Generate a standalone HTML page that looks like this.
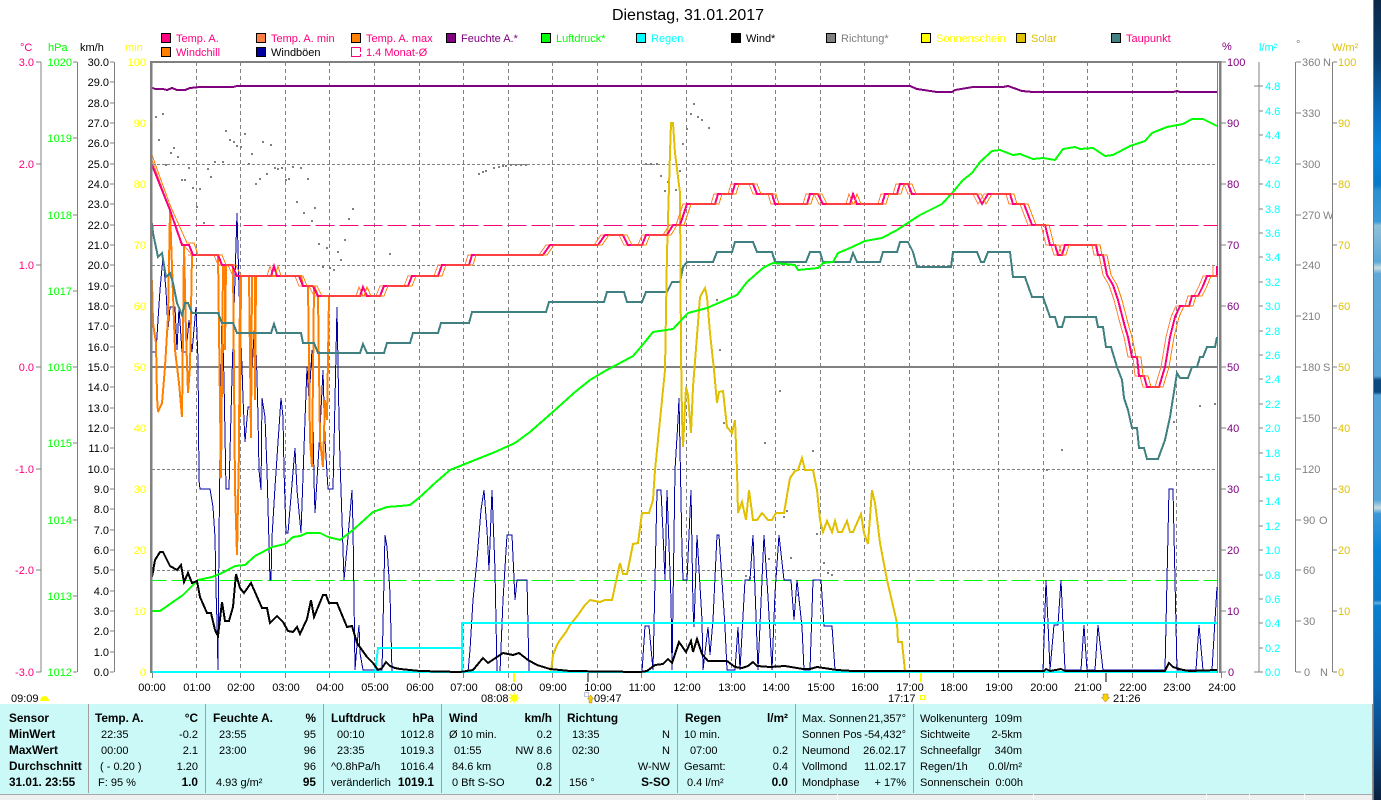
<!DOCTYPE html>
<html><head><meta charset="utf-8"><title>Dienstag, 31.01.2017</title>
<style>
html,body{margin:0;padding:0;background:#fff;width:1381px;height:800px;overflow:hidden}
svg{display:block;position:absolute;left:0;top:0}
text{font-family:"Liberation Sans",sans-serif;font-size:11px}
.b text,text.b{font-weight:bold;font-size:11.8px}
.l{fill:none;stroke-linejoin:miter}
</style></head><body>
<svg width="1381" height="800" viewBox="0 0 1381 800" xmlns="http://www.w3.org/2000/svg">
<defs>
<linearGradient id="wp" gradientUnits="userSpaceOnUse" x1="0" y1="0" x2="0" y2="800">
<stop offset="0" stop-color="#0a2848"/><stop offset=".075" stop-color="#0a3f70"/><stop offset=".137" stop-color="#0a6ab8"/><stop offset=".187" stop-color="#0a86dc"/><stop offset=".231" stop-color="#0878c8"/><stop offset=".238" stop-color="#2a90d0"/><stop offset=".277" stop-color="#3a9ad8"/><stop offset=".282" stop-color="#90c0d8"/><stop offset=".327" stop-color="#5aa8d8"/><stop offset=".335" stop-color="#c8dce0"/><stop offset=".342" stop-color="#5fa8d8"/><stop offset=".47" stop-color="#5aa6d8"/><stop offset=".475" stop-color="#0a4a80"/><stop offset=".49" stop-color="#0a4a80"/><stop offset=".494" stop-color="#55a4d8"/><stop offset=".625" stop-color="#58a6d8"/><stop offset=".635" stop-color="#c8dce0"/><stop offset=".642" stop-color="#3c98d8"/><stop offset=".687" stop-color="#0a84d8"/><stop offset=".75" stop-color="#0a78c8"/><stop offset=".754" stop-color="#60b0e0"/><stop offset=".757" stop-color="#0a80d0"/><stop offset=".85" stop-color="#0a6ab8"/><stop offset=".925" stop-color="#0a4a88"/><stop offset="1" stop-color="#0a2040"/>
</linearGradient>
<clipPath id="pl"><rect x="151" y="62" width="1067" height="611"/></clipPath>
<polyline id="t" fill="none" points="192,255 218,255 222,265 232,265 237,276 267,276 271,276 274,266 277,276 299,276 303,286 313,286 318,296 360,296 363,287 367,296 380,296 384,286 408,286 412,276 438,276 442,265 469,265 472,255 543,255 550,245 598,245 605,235 623,235 628,245 642,245 646,235 667,235 673,225 680,225 687,204 715,204 718,194 732,194 735,184 753,184 757,194 772,194 775,204 807,204 810,194 818,194 823,204 850,204 853,194 857,204 882,204 885,194 897,194 900,184 908,184 912,194 977,194 982,204 988,194 1010,194 1013,204 1024,204 1032,225 1045,225 1050,245 1055,245 1058,255 1062,255 1065,245 1096,245 1098,255 1103,255 1107,275 1113,285 1118,300 1125,327 1128,337 1132,357 1137,357 1139,376 1144,376 1147,387 1159,387 1165,367 1170,337 1175,317 1180,306 1189,306 1192,296 1198,296 1203,286 1207,276 1217,276 1217,266"/>
</defs>

<rect width="1381" height="800" fill="#fff"/>
<text x="688" y="20" text-anchor="middle" style="font-size:16px" fill="#000">Dienstag, 31.01.2017</text>

<!-- legend -->
<g stroke="#000" stroke-width="1" shape-rendering="crispEdges">
<rect x="161.500" y="33.500" width="9" height="9" fill="#FF0080"/><rect x="256.500" y="33.500" width="9" height="9" fill="#FF8040"/><rect x="351.500" y="33.500" width="9" height="9" fill="#FF8000"/><rect x="446.500" y="33.500" width="9" height="9" fill="#800080"/><rect x="541.500" y="33.500" width="9" height="9" fill="#00FF00"/><rect x="636.500" y="33.500" width="9" height="9" fill="#00FFFF"/><rect x="731.500" y="33.500" width="9" height="9" fill="#000"/><rect x="826.500" y="33.500" width="9" height="9" fill="#808080"/><rect x="921.500" y="33.500" width="9" height="9" fill="#FFFF00"/><rect x="1016.500" y="33.500" width="9" height="9" fill="#E0C000"/><rect x="1111.500" y="33.500" width="9" height="9" fill="#408080"/>
<rect x="161.500" y="47.500" width="9" height="9" fill="#FF8000"/><rect x="256.500" y="47.500" width="9" height="9" fill="#0000A0"/>
<path d="M360.500 47.500H351.500V56.500H360.500M360.500 47.500V52M360.500 54V56.500" fill="none" stroke="#FF0080"/>
</g>
<g fill="#FF0080">
<text x="176" y="42">Temp. A.</text><text x="271" y="42">Temp. A. min</text><text x="366" y="42">Temp. A. max</text><text x="1126" y="42">Taupunkt</text>
<text x="176" y="56">Windchill</text><text x="366" y="56">1.4 Monat-Ø</text>
</g>
<text x="461" y="42" fill="#800080">Feuchte A.*</text><text x="556" y="42" fill="#00FF00">Luftdruck*</text><text x="651" y="42" fill="#00FFFF">Regen</text><text x="746" y="42" fill="#000">Wind*</text><text x="841" y="42" fill="#808080">Richtung*</text><text x="936" y="42" fill="#FFFF00">Sonnenschein</text><text x="1031" y="42" fill="#E0C000">Solar</text><text x="271" y="56" fill="#000">Windböen</text>

<!-- unit labels -->
<text x="20" y="51" fill="#FF0080">°C</text><text x="48" y="51" fill="#00FF00">hPa</text><text x="80" y="51" fill="#000">km/h</text><text x="125" y="51" fill="#FFFF00">min</text>
<text x="1222" y="50" fill="#800080">%</text><text x="1259" y="51" fill="#00FFFF">l/m²</text><text x="1296" y="48" fill="#808080">°</text><text x="1332" y="51" fill="#E0C000">W/m²</text>

<!-- axes left -->
<g stroke="#808080" stroke-width="1" fill="none" shape-rendering="crispEdges">
<path d="M41 62V672M36 62H41M36 164H41M36 265H41M36 367H41M36 469H41M36 570H41M36 672H41"/>
<path d="M77.500 62V672M73 62H77M73 138H77M73 215H77M73 291H77M73 367H77M73 443H77M73 520H77M73 596H77M73 672H77"/>
<path d="M114.500 62V672M110 62H114M110 82H114M110 103H114M110 123H114M110 143H114M110 164H114M110 184H114M110 204H114M110 225H114M110 245H114M110 265H114M110 286H114M110 306H114M110 326H114M110 347H114M110 367H114M110 387H114M110 408H114M110 428H114M110 448H114M110 469H114M110 489H114M110 509H114M110 530H114M110 550H114M110 570H114M110 591H114M110 611H114M110 631H114M110 652H114M110 672H114"/>
<!-- axes right -->
<path d="M1221 62H1226M1221 123H1226M1221 184H1226M1221 245H1226M1221 306H1226M1221 367H1226M1221 428H1226M1221 489H1226M1221 550H1226M1221 611H1226M1221 672H1226"/>
<path d="M1259 62V672M1254 86H1263M1259 111H1263M1259 135H1263M1259 160H1263M1259 184H1263M1259 209H1263M1259 233H1263M1259 257H1263M1259 282H1263M1259 306H1263M1259 331H1263M1259 355H1263M1259 379H1263M1259 404H1263M1259 428H1263M1259 453H1263M1259 477H1263M1259 501H1263M1259 526H1263M1259 550H1263M1259 575H1263M1259 599H1263M1259 623H1263M1259 648H1263M1254 672H1263"/>
<path d="M1295.500 62V672M1296 62H1301M1296 113H1301M1296 164H1301M1296 215H1301M1296 265H1301M1296 316H1301M1296 367H1301M1296 418H1301M1296 469H1301M1296 520H1301M1296 570H1301M1296 621H1301M1296 672H1301"/>
<path d="M1332.500 62V672M1333 62H1337M1333 123H1337M1333 184H1337M1333 245H1337M1333 306H1337M1333 367H1337M1333 428H1337M1333 489H1337M1333 550H1337M1333 611H1337M1333 672H1337"/>
</g>
<g fill="#FF0080" text-anchor="end"><text x="34" y="66">3.0</text><text x="34" y="168">2.0</text><text x="34" y="269">1.0</text><text x="34" y="371">0.0</text><text x="34" y="473">-1.0</text><text x="34" y="574">-2.0</text><text x="34" y="676">-3.0</text></g>
<g fill="#00FF00" text-anchor="end"><text x="72" y="66">1020</text><text x="72" y="142">1019</text><text x="72" y="219">1018</text><text x="72" y="295">1017</text><text x="72" y="371">1016</text><text x="72" y="447">1015</text><text x="72" y="524">1014</text><text x="72" y="600">1013</text><text x="72" y="676">1012</text></g>
<g fill="#000" text-anchor="end"><text x="109" y="66">30.0</text><text x="109" y="86">29.0</text><text x="109" y="107">28.0</text><text x="109" y="127">27.0</text><text x="109" y="147">26.0</text><text x="109" y="168">25.0</text><text x="109" y="188">24.0</text><text x="109" y="208">23.0</text><text x="109" y="229">22.0</text><text x="109" y="249">21.0</text><text x="109" y="269">20.0</text><text x="109" y="290">19.0</text><text x="109" y="310">18.0</text><text x="109" y="330">17.0</text><text x="109" y="351">16.0</text><text x="109" y="371">15.0</text><text x="109" y="391">14.0</text><text x="109" y="412">13.0</text><text x="109" y="432">12.0</text><text x="109" y="452">11.0</text><text x="109" y="473">10.0</text><text x="109" y="493">9.0</text><text x="109" y="513">8.0</text><text x="109" y="534">7.0</text><text x="109" y="554">6.0</text><text x="109" y="574">5.0</text><text x="109" y="595">4.0</text><text x="109" y="615">3.0</text><text x="109" y="635">2.0</text><text x="109" y="656">1.0</text><text x="109" y="676">0.0</text></g>
<g fill="#FFFF00" text-anchor="end"><text x="146" y="66">100</text><text x="146" y="127">90</text><text x="146" y="188">80</text><text x="146" y="249">70</text><text x="146" y="310">60</text><text x="146" y="371">50</text><text x="146" y="432">40</text><text x="146" y="493">30</text><text x="146" y="554">20</text><text x="146" y="615">10</text><text x="146" y="676">0</text></g>
<g fill="#800080"><text x="1227" y="66">100</text><text x="1227" y="127">90</text><text x="1227" y="188">80</text><text x="1227" y="249">70</text><text x="1227" y="310">60</text><text x="1227" y="371">50</text><text x="1227" y="432">40</text><text x="1227" y="493">30</text><text x="1227" y="554">20</text><text x="1227" y="615">10</text><text x="1228" y="676">0</text></g>
<g fill="#00FFFF"><text x="1265" y="90">4.8</text><text x="1265" y="115">4.6</text><text x="1265" y="139">4.4</text><text x="1265" y="164">4.2</text><text x="1265" y="188">4.0</text><text x="1265" y="213">3.8</text><text x="1265" y="237">3.6</text><text x="1265" y="261">3.4</text><text x="1265" y="286">3.2</text><text x="1265" y="310">3.0</text><text x="1265" y="335">2.8</text><text x="1265" y="359">2.6</text><text x="1265" y="383">2.4</text><text x="1265" y="408">2.2</text><text x="1265" y="432">2.0</text><text x="1265" y="457">1.8</text><text x="1265" y="481">1.6</text><text x="1265" y="505">1.4</text><text x="1265" y="530">1.2</text><text x="1265" y="554">1.0</text><text x="1265" y="579">0.8</text><text x="1265" y="603">0.6</text><text x="1265" y="627">0.4</text><text x="1265" y="652">0.2</text><text x="1265" y="676">0.0</text></g>
<g fill="#808080"><text x="1302" y="66">360</text><text x="1302" y="117">330</text><text x="1302" y="168">300</text><text x="1302" y="219">270</text><text x="1302" y="269">240</text><text x="1302" y="320">210</text><text x="1302" y="371">180</text><text x="1302" y="422">150</text><text x="1302" y="473">120</text><text x="1303" y="524">90</text><text x="1303" y="574">60</text><text x="1303" y="625">30</text><text x="1304" y="676">0</text><text x="1323" y="66">N</text><text x="1323" y="219">W</text><text x="1323" y="371">S</text><text x="1319" y="524">O</text><text x="1320" y="676">N</text></g>
<g fill="#E0C000"><text x="1338" y="66">100</text><text x="1338" y="127">90</text><text x="1338" y="188">80</text><text x="1338" y="249">70</text><text x="1338" y="310">60</text><text x="1338" y="371">50</text><text x="1338" y="432">40</text><text x="1338" y="493">30</text><text x="1338" y="554">20</text><text x="1338" y="615">10</text><text x="1338" y="676">0</text></g>

<!-- grid -->
<g shape-rendering="crispEdges" fill="none">
<path stroke="#808080" stroke-dasharray="4 3" d="M196.500 62V672M240.500 62V672M285.500 62V672M329.500 62V672M374.500 62V672M419.500 62V672M463.500 62V672M508.500 62V672M552.500 62V672M597.500 62V672M641.500 62V672M686.500 62V672M731.500 62V672M775.500 62V672M820.500 62V672M864.500 62V672M909.500 62V672M953.500 62V672M998.500 62V672M1043.500 62V672M1087.500 62V672M1132.500 62V672M1176.500 62V672"/>
<path stroke="#808080" stroke-dasharray="3 2" d="M152 164.500H1218M152 265.500H1218M152 469.500H1218M152 570.500H1218"/>
<path stroke="#808080" stroke-width="2" d="M152 367H1218"/>
<path stroke="#FF0080" stroke-dasharray="19 5" stroke-dashoffset="4.700" d="M152 225.500H1218"/>
<path stroke="#00FF00" stroke-dasharray="19 5" stroke-dashoffset="4.700" d="M152 580.500H1218"/>
<path stroke="#808080" d="M152 672.500H1218M1217.500 62V672"/>
<path stroke="#808080" d="M152.500 672V678M196.500 672V678M240.500 672V678M285.500 672V678M329.500 672V678M374.500 672V678M419.500 672V678M463.500 672V678M508.500 672V678M552.500 672V678M597.500 672V678M641.500 672V678M686.500 672V678M731.500 672V678M775.500 672V678M820.500 672V678M864.500 672V678M909.500 672V678M953.500 672V678M998.500 672V678M1043.500 672V678M1087.500 672V678M1132.500 672V678M1176.500 672V678M1221.500 672V678"/>
<path stroke="#FFFF00" stroke-width="2" d="M514 672V682M921 672V682"/>
<path stroke="#808080" stroke-width="2" d="M588 672V682M1106 672V682"/>
</g>

<!-- dots -->
<path shape-rendering="crispEdges" stroke="#808080" stroke-width="2" fill="none" d="M155 117h2M162 114h2M158 140h2M225 131h2M229 140h2M233 142h2M236 146h2M240 147h2M244 134h2M262 142h2M270 145h2M170 153h2M173 148h2M177 157h2M251 154h2M248 164h2M165 165h2M188 168h2M207 169h2M214 162h2M222 162h2M210 177h2M181 180h2M184 180h2M192 188h2M199 189h2M255 184h2M259 179h2M266 174h2M274 168h2M277 169h2M281 168h2M292 167h2M300 168h2M285 180h2M288 179h2M307 179h2M196 207h2M203 223h2M296 202h2M303 213h2M311 221h2M314 208h2M352 209h2M348 219h2M344 240h2M318 244h2M326 248h2M337 252h2M340 260h2M322 267h2M329 268h2M389 254h2M333 270h2M478 174h2M482 172h2M485 171h2M493 168h2M498 167h2M502 166h2M505 166h2M510 165h2M515 165h2M520 165h2M525 165h2M645 164h2M650 164h2M656 164h2M660 176h2M667 182h2M664 191h2M675 190h2M679 171h2M682 144h2M686 129h2M690 114h2M693 104h2M697 117h2M701 120h2M708 128h2M723 423h2M764 443h2M812 451h2M790 558h2M823 563h2M827 573h2M831 575h2M816 534h2M820 528h2M768 559h2M745 576h2M749 578h2M753 577h2M786 511h2M783 517h2M797 595h2M716 300h2M719 350h2M779 391h2M1061 450h2M1199 406h2M1214 404h2M1173 422h2M1046 470h2"/>

<g clip-path="url(#pl)" shape-rendering="crispEdges">
<!-- gusts -->
<polyline class="l" stroke="#0000A0" stroke-width="1" points="152,352 156,352 158,320 160,290 163,257 166,290 168,330 170,307 175,307 177,350 179,307 182,352 186,352 189,320 192,352 196,307 198,360 199,480 200,489 210,489 213,507 215,537 216,590 217,622 218,670 219,537 222,307 224,380 226,489 229,489 232,377 235,278 237,213 238,248 239,290 242,367 243,398 245,442 248,407 250,407 255,317 257,377 258,417 259,470 261,490 262,398 265,417 267,470 270,580 271,580 272,537 275,487 281,398 283,417 284,470 286,533 288,533 295,448 297,490 301,533 305,420 307,367 309,400 312,350 314,480 315,513 320,430 323,370 325,440 328,489 333,489 335,400 337,307 339,420 340,460 344,580 348,537 352,490 353,527 355,670 357,645 359,625 360,653 363,670 382,670 385,535 387,547 390,593 392,672 468,672 470,650 473,600 477,560 481,510 484,490 487,530 489,570 492,490 495,570 497,672 500,672 503,600 507,535 512,535 515,600 517,580 527,580 529,672 642,672 645,626 649,626 653,670 655,580 657,490 661,490 663,533 665,580 667,490 671,600 672,670 675,470 678,420 679,398 682,550 683,580 687,580 691,490 693,607 694,627 697,535 702,620 703,670 708,627 710,655 713,620 717,535 719,535 725,627 727,670 735,670 738,627 740,670 745,580 750,580 753,535 758,670 762,580 764,535 768,597 772,670 775,593 779,535 784,580 791,580 794,620 797,580 802,627 804,670 810,670 813,580 821,580 824,626 832,626 835,670 840,672 1043,672 1046,580 1048,623 1050,670 1054,625 1058,625 1061,580 1065,670 1081,670 1084,625 1087,670 1095,670 1098,625 1103,670 1165,670 1169,489 1173,489 1177,670 1196,670 1199,625 1203,670 1212,670 1217,587"/>
<!-- windchill -->
<polyline class="l" stroke="#FF8000" stroke-width="2" points="152,280 153,323 156,343 157,397 158,412 162,403 165,367 168,317 170,210 172,267 175,350 179,383 182,417 184,245 186,333 188,393 190,367 192,255 218,255 221,478 223,265 225,265 225,350 226,265 233,265 235,487 237,555 239,450 240,276 240,417 241,276 249,276 251,438 252,276 255,276 255,400 256,276 301,276 303,286 308,286 310,440 312,467 314,286 318,296 320,440 323,467 325,400 327,420 329,296 332,296"/>
<!-- dewpoint -->
<polyline class="l" stroke="#408080" stroke-width="2" points="152,223 153,233 158,257 162,253 166,277 170,273 173,283 177,303 182,315 185,303 188,303 192,313 218,313 222,323 233,323 237,333 271,333 274,324 277,333 301,333 303,343 314,343 318,353 360,353 363,344 367,353 384,353 387,343 410,343 413,333 438,333 441,323 469,323 472,312 546,312 549,302 604,302 607,292 624,292 627,302 642,302 646,292 667,292 672,282 680,282 683,267 687,262 713,262 717,252 732,252 735,242 753,242 757,252 772,252 775,262 806,262 810,252 820,252 823,262 850,262 853,253 857,262 880,262 883,252 897,252 900,242 908,242 913,252 917,267 951,267 953,252 977,252 981,262 984,262 988,252 1010,252 1013,277 1025,277 1032,297 1043,297 1050,317 1055,317 1058,327 1062,327 1065,317 1096,317 1098,327 1103,327 1106,347 1111,347 1117,367 1122,380 1124,398 1128,410 1132,428 1137,428 1139,448 1144,448 1147,459 1158,459 1165,440 1170,417 1177,373 1180,378 1188,378 1192,367 1197,367 1200,357 1203,357 1207,347 1215,347 1217,337"/>
<!-- solar -->
<polyline class="l" stroke="#E0C000" stroke-width="2" points="551,672 553,655 557,645 560,640 566,632 570,625 578,615 585,605 590,600 600,602 605,600 612,600 620,563 623,574 627,574 633,544 638,543 642,513 649,513 653,500 655,470 660,420 665,370 667,253 670,153 671,123 673,123 675,153 680,193 681,353 682,417 683,447 686,387 688,395 691,433 693,387 700,297 705,288 707,297 710,333 714,370 717,403 719,392 723,391 727,427 732,433 735,420 737,470 738,513 742,502 746,520 749,490 753,520 757,520 762,513 768,520 772,520 776,513 784,513 790,478 795,471 798,470 802,458 805,470 813,470 817,490 820,520 823,532 827,521 832,532 835,521 838,532 842,532 847,521 850,532 853,532 861,514 864,533 868,544 872,490 875,503 880,543 887,580 897,623 898,642 902,642 905,671"/>
<!-- pressure -->
<polyline class="l" stroke="#00FF00" stroke-width="2" points="152,611 160,611 183,595 198,580 212,577 222,573 235,566 245,565 255,556 272,547 285,544 293,537 300,536 307,533 320,533 328,537 340,540 353,530 373,512 387,507 400,506 410,505 420,497 435,483 450,470 470,462 495,452 515,443 530,432 555,410 575,392 590,380 605,371 620,363 633,356 640,348 653,332 673,329 688,313 707,308 737,295 747,282 763,268 773,263 795,265 798,270 818,268 823,263 833,262 838,253 850,248 865,241 882,238 897,230 920,215 942,204 953,192 963,180 972,173 980,162 992,151 1000,150 1013,155 1020,154 1033,159 1043,158 1055,160 1063,149 1075,147 1080,149 1093,148 1105,156 1113,155 1130,146 1145,141 1152,133 1167,127 1183,124 1192,119 1203,119 1217,126"/>
<!-- humidity -->
<polyline class="l" stroke="#800080" stroke-width="2" points="151,87 155,89 163,89 167,90 172,88 177,90 185,90 190,88 200,87 233,87 237,86 910,86 917,89 937,92 952,92 955,90 973,87 1003,87 1008,86 1022,91 1033,92 1173,92 1177,91 1180,92 1217,92"/>
<!-- temp max/min thin -->
<polyline class="l" stroke="#FF8040" stroke-width="1" points="152,160 182,243 192,255"/>
<use href="#t" stroke="#FF8040" stroke-width="1" transform="translate(-4,0)"/>
<!-- temp -->
<polyline class="l" stroke="#FF0080" stroke-width="2" points="152,165 170,210 182,245 189,245 193,255"/>
<use href="#t" stroke="#FF0080" stroke-width="2"/>
<polyline class="l" stroke="#FF8000" stroke-width="1" points="152,155 170,205 187,243 194,243 198,255"/>
<use href="#t" stroke="#FF8000" stroke-width="1" transform="translate(4,0)"/>
<!-- rain -->
<path fill="none" stroke="#00FFFF" stroke-width="2" d="M152 672H1217M375 672L378 648H462M462 672V623H1217"/>
<!-- wind -->
<polyline class="l" stroke="#000" stroke-width="2" points="152,577 155,560 160,552 163,552 170,566 177,570 181,565 184,582 188,573 192,583 197,581 200,597 207,613 211,613 215,630 218,636 222,602 225,621 229,621 233,607 236,574 240,588 244,593 251,583 262,608 267,608 270,623 277,616 283,622 288,631 293,632 297,627 300,634 307,619 311,600 314,617 323,595 326,595 329,603 337,603 347,627 352,626 357,643 367,657 373,663 378,670 382,668 386,662 390,666 395,668 400,669 420,671 460,672 473,670 483,658 488,663 503,653 513,655 519,653 528,660 537,665 550,669 570,671 640,672 647,671 655,665 663,664 668,659 672,663 679,642 686,652 691,641 693,652 697,639 702,654 708,661 727,661 735,667 742,668 748,666 753,662 757,666 770,667 785,666 803,669 810,669 817,667 837,670 853,671 1044,671 1046,669 1050,671 1061,669 1065,671 1165,671 1169,663 1173,667 1183,670 1190,671 1217,670"/>
</g>

<!-- plot frame -->
<g shape-rendering="crispEdges" fill="#808080">
<rect x="150" y="61" width="1071" height="2"/><rect x="150" y="61" width="2.500" height="612"/><rect x="1219" y="61" width="2.500" height="612"/>
</g>

<!-- hours -->
<g fill="#000" text-anchor="middle"><text x="152" y="691">00:00</text><text x="197" y="691">01:00</text><text x="241" y="691">02:00</text><text x="286" y="691">03:00</text><text x="330" y="691">04:00</text><text x="375" y="691">05:00</text><text x="420" y="691">06:00</text><text x="464" y="691">07:00</text><text x="509" y="691">08:00</text><text x="553" y="691">09:00</text><text x="598" y="691">10:00</text><text x="642" y="691">11:00</text><text x="687" y="691">12:00</text><text x="732" y="691">13:00</text><text x="776" y="691">14:00</text><text x="821" y="691">15:00</text><text x="865" y="691">16:00</text><text x="910" y="691">17:00</text><text x="954" y="691">18:00</text><text x="999" y="691">19:00</text><text x="1044" y="691">20:00</text><text x="1088" y="691">21:00</text><text x="1133" y="691">22:00</text><text x="1177" y="691">23:00</text><text x="1222" y="691">24:00</text></g>
<g fill="#000"><text x="11" y="702">09:09</text><text x="481" y="702">08:08</text><text x="594" y="702">09:47</text><text x="888" y="702">17:17</text><text x="1113" y="702">21:26</text></g>
<path d="M40 701a4.500 5 0 0 1 9 0z" fill="#FFFF00"/>
<circle cx="514" cy="698" r="3.500" fill="#FFFF00"/><path d="M514 692.500v11M508.500 698h11M510 694l8 8M518 694l-8 8" stroke="#FFFF00" stroke-width="1"/>
<rect x="584.500" y="692.500" width="4" height="4" fill="none" stroke="#8080c0" stroke-dasharray="1 1"/>
<path d="M590.500 695l3 4h-1.500v4h-3v-4h-1.500z" fill="#FFD000" stroke="#806000" stroke-width=".4"/>
<rect x="920.500" y="695.500" width="4" height="4" fill="none" stroke="#FFFF00"/>
<path d="M1103 694h5v3.500h1.500l-4 4.500-4-4.500h1.500z" fill="#FFD000" stroke="#806000" stroke-width=".4"/>

<!-- bottom panel -->
<rect x="0" y="704" width="1372" height="90" fill="#caf9f7"/>
<rect x="0" y="795" width="1372" height="5" fill="#f0f0f0"/>
<rect x="0" y="794" width="1372" height="1" fill="#a8a8a8"/>
<g fill="#fff" shape-rendering="crispEdges"><rect x="837" y="794" width="1" height="6"/><rect x="1033" y="794" width="1" height="6"/><rect x="1206" y="794" width="1" height="6"/><rect x="1249" y="794" width="1" height="6"/><rect x="1304" y="794" width="1" height="6"/></g>
<rect x="1372" y="704" width="1" height="96" fill="#909090"/>
<g fill="#a0a0a0" shape-rendering="crispEdges"><rect x="88" y="704" width="1" height="89"/><rect x="205" y="704" width="1" height="89"/><rect x="323" y="704" width="1" height="89"/><rect x="441" y="704" width="1" height="89"/><rect x="559" y="704" width="1" height="89"/><rect x="677" y="704" width="1" height="89"/><rect x="795" y="704" width="1" height="89"/><rect x="913" y="704" width="1" height="89"/></g>

<g class="b" fill="#000">
<text x="9" y="722">Sensor</text><text x="9" y="738">MinWert</text><text x="9" y="754">MaxWert</text><text x="9" y="770">Durchschnitt</text><text x="9" y="786">31.01. 23:55</text>
<text x="95" y="722">Temp. A.</text><text x="198" y="722" text-anchor="end">°C</text><text x="198" y="786" text-anchor="end">1.0</text>
<text x="213" y="722">Feuchte A.</text><text x="316" y="722" text-anchor="end">%</text><text x="316" y="786" text-anchor="end">95</text>
<text x="331" y="722">Luftdruck</text><text x="434" y="722" text-anchor="end">hPa</text><text x="434" y="786" text-anchor="end">1019.1</text>
<text x="449" y="722">Wind</text><text x="552" y="722" text-anchor="end">km/h</text><text x="552" y="786" text-anchor="end">0.2</text>
<text x="567" y="722">Richtung</text><text x="670" y="786" text-anchor="end">S-SO</text>
<text x="685" y="722">Regen</text><text x="788" y="722" text-anchor="end">l/m²</text><text x="788" y="786" text-anchor="end">0.0</text>
</g>
<g fill="#000">
<text x="101" y="738">22:35</text><text x="101" y="754">00:00</text><text x="100" y="770">( - 0.20 )</text><text x="98" y="786">F: 95 %</text>
<text x="219" y="738">23:55</text><text x="219" y="754">23:00</text><text x="216" y="786">4.93 g/m²</text>
<text x="337" y="738">00:10</text><text x="337" y="754">23:35</text><text x="331" y="770">^0.8hPa/h</text><text x="331" y="786">veränderlich</text>
<text x="449" y="738">Ø 10 min.</text><text x="454" y="754">01:55</text><text x="452" y="770">84.6 km</text><text x="452" y="786">0 Bft S-SO</text>
<text x="572" y="738">13:35</text><text x="572" y="754">02:30</text><text x="569" y="786">156 °</text>
<text x="684" y="738">10 min.</text><text x="690" y="754">07:00</text><text x="684" y="770">Gesamt:</text><text x="687" y="786">0.4 l/m²</text>
<text x="802" y="722">Max. Sonnen</text><text x="802" y="738">Sonnen Pos</text><text x="802" y="754">Neumond</text><text x="802" y="770">Vollmond</text><text x="802" y="786">Mondphase</text>
<text x="920" y="722">Wolkenunterg</text><text x="920" y="738">Sichtweite</text><text x="920" y="754">Schneefallgr</text><text x="920" y="770">Regen/1h</text><text x="920" y="786">Sonnenschein</text>
<g text-anchor="end">
<text x="198" y="738">-0.2</text><text x="198" y="754">2.1</text><text x="198" y="770">1.20</text>
<text x="316" y="738">95</text><text x="316" y="754">96</text><text x="316" y="770">96</text>
<text x="434" y="738">1012.8</text><text x="434" y="754">1019.3</text><text x="434" y="770">1016.4</text>
<text x="552" y="738">0.2</text><text x="552" y="754">NW 8.6</text><text x="552" y="770">0.8</text>
<text x="670" y="738">N</text><text x="670" y="754">N</text><text x="670" y="770">W-NW</text>
<text x="788" y="754">0.2</text><text x="788" y="770">0.4</text>
<text x="906" y="722">21,357°</text><text x="906" y="738">-54,432°</text><text x="906" y="754">26.02.17</text><text x="906" y="770">11.02.17</text><text x="906" y="786">+ 17%</text>
<text x="1022" y="722">109m</text><text x="1022" y="738">2-5km</text><text x="1022" y="754">340m</text><text x="1022" y="770">0.0l/m²</text><text x="1023" y="786">0:00h</text>
</g>
</g>

<!-- wallpaper strip -->
<rect x="1373" y="0" width="8" height="800" fill="url(#wp)"/>
<rect x="1373" y="0" width="1" height="800" fill="#2a8ae0"/>
</svg>
</body></html>
